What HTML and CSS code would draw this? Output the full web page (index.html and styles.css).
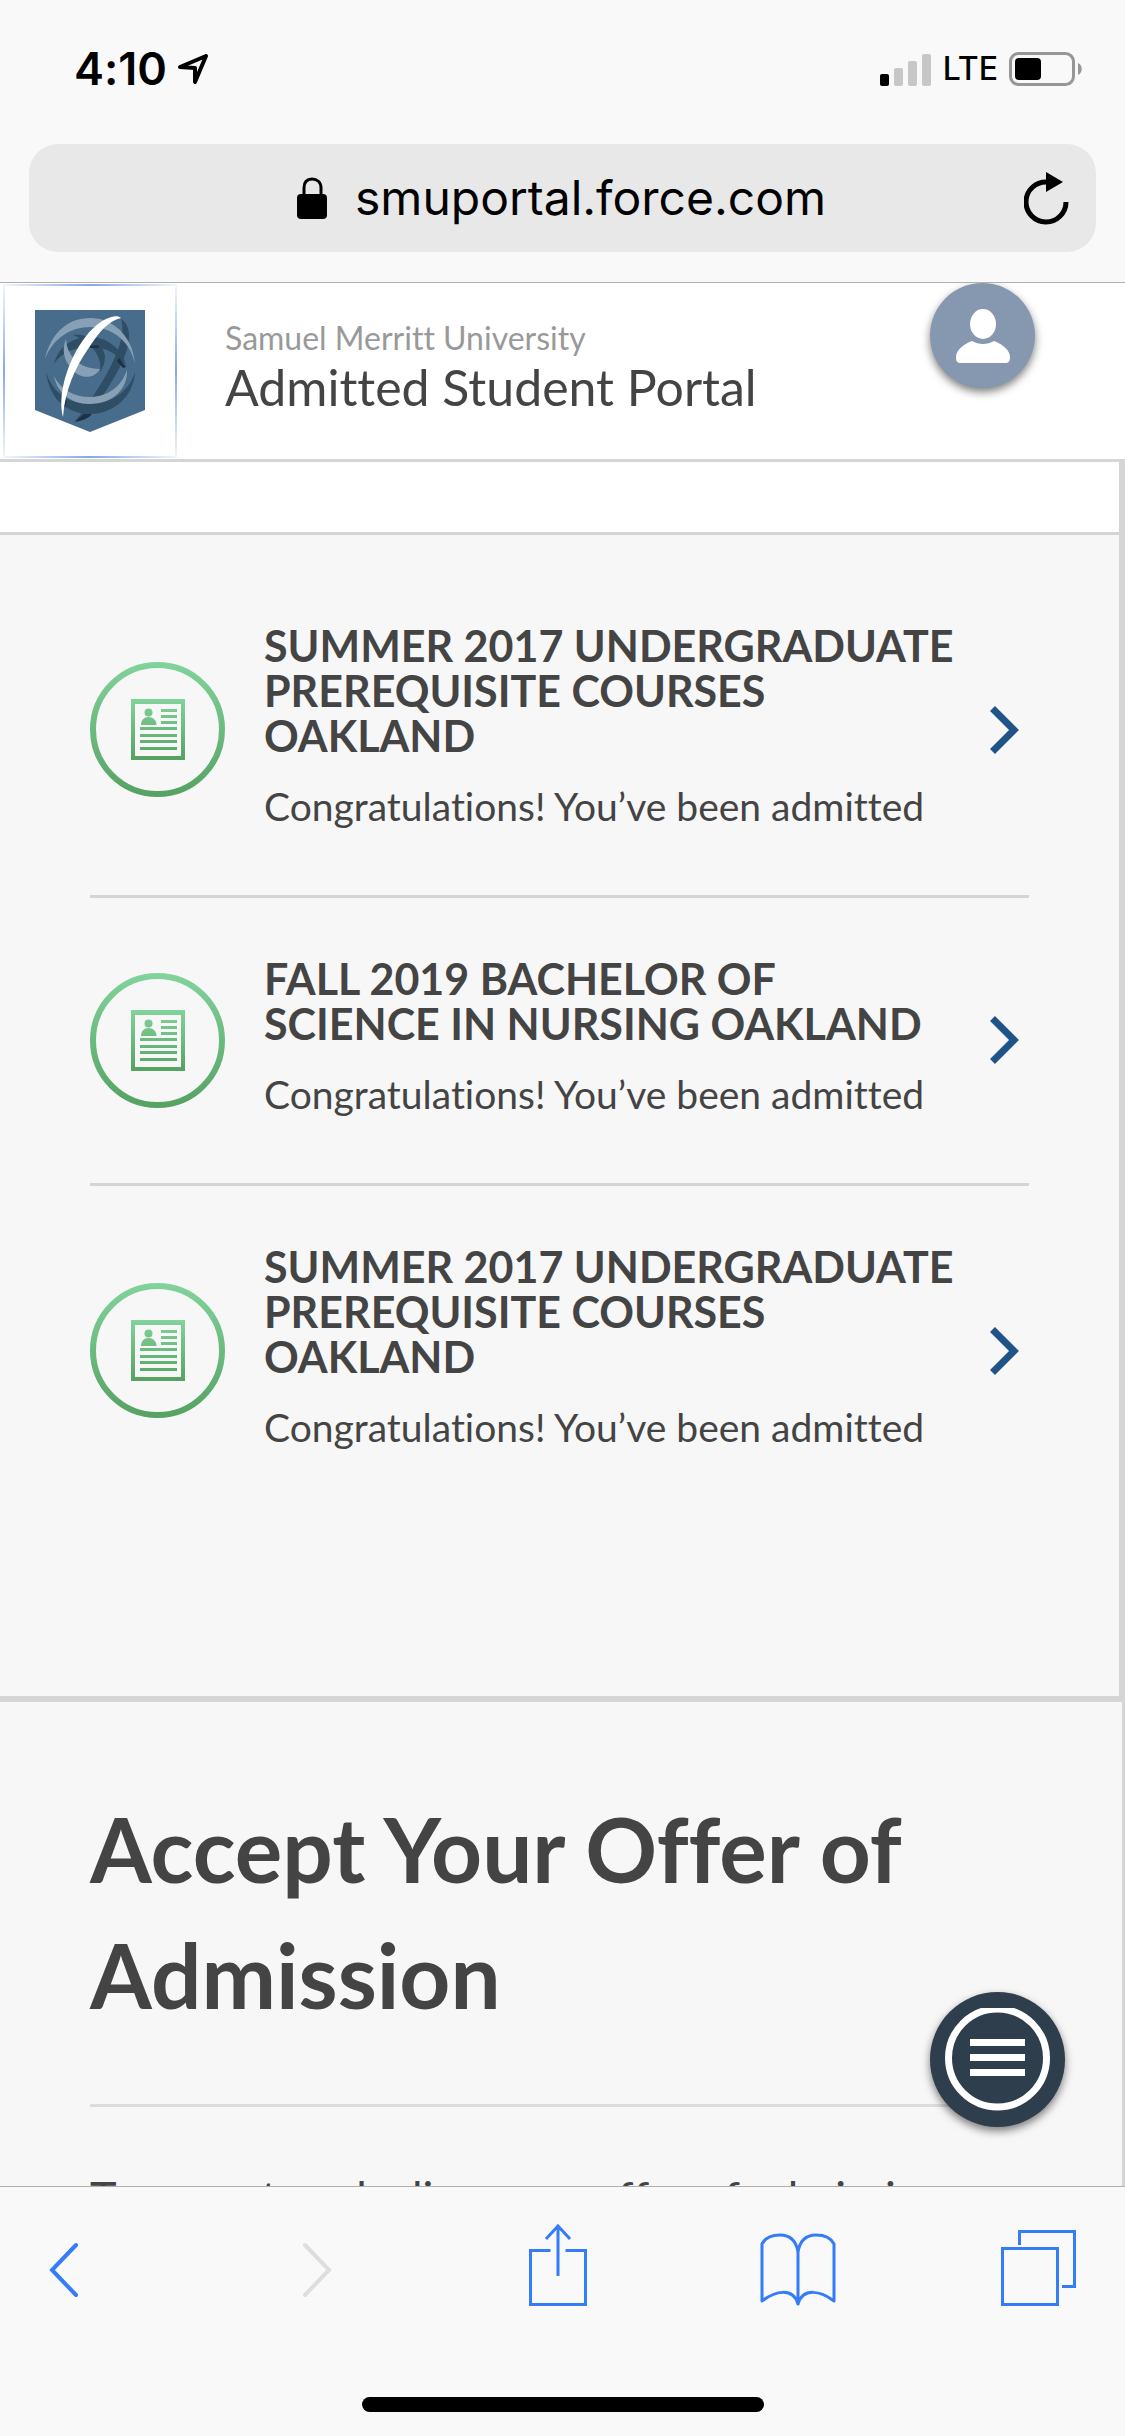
FILE: index.html
```html
<!DOCTYPE html>
<html lang="en">
<head>
<meta charset="utf-8">
<meta name="viewport" content="width=device-width, initial-scale=1">
<title>Admitted Student Portal</title>
<link rel="stylesheet" href="styles.css">
</head>
<body>
<svg class="defs" width="0" height="0" aria-hidden="true">
  <defs>
    <linearGradient id="ring-green" gradientUnits="userSpaceOnUse" x1="0" y1="0" x2="0" y2="135">
      <stop offset="0" stop-color="#82d39c"/><stop offset="1" stop-color="#55a262"/>
    </linearGradient>
    <linearGradient id="doc-green" gradientUnits="userSpaceOnUse" x1="0" y1="37" x2="0" y2="98">
      <stop offset="0" stop-color="#82d39c"/><stop offset="1" stop-color="#55a262"/>
    </linearGradient>
    <symbol id="letter" viewBox="0 0 135 135">
      <circle cx="67.5" cy="67.5" r="64.5" fill="none" stroke="url(#ring-green)" stroke-width="6"/>
      <g fill="url(#doc-green)">
        <path fill-rule="evenodd" d="M41 37h54v61H41zM45 42v52h46V42z"/>
        <circle cx="58.500" cy="50.500" r="4"/>
        <path d="M51 63c0-5 3-8 7.500-8s8 3 8 8z"/>
        <path d="M71 47h16v3H71zM71 53h16v3H71zM71 59h16v3H71zM50 65h37v3H50zM50 72h37v3H50zM50 78h37v3H50zM50 85h37v3H50z"/>
      </g>
    </symbol>
    <symbol id="chevron" viewBox="0 0 29 48">
      <path d="M2.500 2.500L24 24 2.500 45.500" fill="none" stroke="#205488" stroke-width="7"/>
    </symbol>
  </defs>
</svg>

<header class="chrome">
  <div class="status">
    <div class="status-group">
      <span class="time">4:10</span>
      <svg class="location" viewBox="0 0 30 30" width="30" height="30" aria-hidden="true"><path d="M2 13L28 2 17 28v-14z" fill="none" stroke="#000" stroke-width="4" stroke-linejoin="round"/></svg>
    </div>
    <div class="status-group">
      <svg viewBox="0 0 52 33" width="52" height="33" aria-hidden="true"><rect y="21" width="9" height="12" rx="2"/><g fill="#c7c7c7"><rect x="14" y="15" width="9" height="18" rx="2"/><rect x="28" y="8" width="9" height="25" rx="2"/><rect x="42" y="1" width="9" height="32" rx="2"/></g></svg>
      <span class="carrier">LTE</span>
      <svg viewBox="0 0 74 34" width="74" height="34" aria-hidden="true"><rect x="1.500" y="1.500" width="63" height="31" rx="8" fill="none" stroke="#979797" stroke-width="3"/><rect x="6" y="6" width="26" height="22" rx="4"/><path d="M69 11c5 2 5 10 0 12z" fill="#979797"/></svg>
    </div>
  </div>
  <div class="address">
    <a class="site" href="#">
      <svg viewBox="0 0 30 42" width="30" height="42" aria-hidden="true"><rect y="17" width="30" height="25" rx="4"/><path d="M7 20v-9c0-6 3-9 8-9s9 3 9 9v9" fill="none" stroke="#000" stroke-width="3"/></svg>
      <span>smuportal.force.com</span>
    </a>
    <button class="icon-button reload" aria-label="Reload">
      <svg viewBox="0 0 46 54" width="46" height="54" aria-hidden="true"><path d="M23 11a20 20 0 1 0 19 20" fill="none" stroke="#000" stroke-width="5"/><path d="M22 1l17 10-17 10z"/></svg>
    </button>
  </div>
</header>

<main class="portal">
  <div class="brand-bar">
    <a class="logo" href="#" aria-label="Samuel Merritt University">
      <svg viewBox="0 0 110 122" width="110" height="122" aria-hidden="true">
        <path d="M0 0h110v100l-55 22L0 100z" fill="#486d8c"/>
        <path d="M86 9c14 8 8 34-5 55C69 86 56 104 39 112c8-9 14-17 20-27 12-19 34-54 27-76z" fill="#304d66"/>
        <path d="M11 62c7 22 24 32 44 32s39-12 45-32c-1 24-21 42-45 42S14 88 11 62zM19 54c4-17 18-27 36-27 17 0 33 12 36 29-8-12-20-19-36-19-15 0-28 5-36 17z" fill="#304d66"/>
        <path d="M38 25c14-2 31 7 32 22 0 6-2 11-5 15 3-16-9-29-27-37z" fill="#304d66"/>
        <path d="M10 49C16 22 34 8 55 8c23 0 43 18 45 46-4-20-20-37-45-37-19 0-37 11-45 32zM19 66c7 14 20 21 36 21s31-9 37-27c1 20-16 34-37 34-20 0-33-12-36-28zM31 29c1 16 12 30 34 30-7 12-22 9-29-1-8-9-9-20-5-29z" fill="#87a0b5"/>
        <path d="M29 88l3 3c-1 4-2 6-4 7zM55 36c3-1 7-1 10 0l-2 2h-8zM84 48l7 9-3 1-6-7zM49 104h8c-4 5-11 7-17 8z" fill="#1d304a"/>
        <path d="M86 8c-3-3-9-2-15 1C45 21 20 74 28 107c2-27 12-49 25-68C64 22 73 11 86 8z" fill="#fff"/>
      </svg>
    </a>
    <div class="brand-text">
      <p class="university">Samuel Merritt University</p>
      <h1 class="portal-name">Admitted Student Portal</h1>
    </div>
    <button class="icon-button avatar" aria-label="Account">
      <svg viewBox="0 0 54 54" width="54" height="54" aria-hidden="true"><ellipse cx="27" cy="15" rx="13" ry="15" fill="#fff"/><path d="M16 32c7 4 15 4 22 0 10 4 16 10 16 16 0 4-1 6-5 6H5c-4 0-5-2-5-6 0-6 6-12 16-16z" fill="#fff"/></svg>
    </button>
  </div>

  <section class="applications">
    <div class="spacer-bar"></div>
    <ul class="app-list">
      <li><a class="app" href="#">
        <svg class="badge" aria-hidden="true"><use href="#letter"/></svg>
        <div class="app-text"><h2>SUMMER 2017 UNDERGRADUATE PREREQUISITE COURSES OAKLAND</h2><p>Congratulations! You’ve been admitted</p></div>
        <svg class="chevron" aria-hidden="true"><use href="#chevron"/></svg>
      </a></li>
      <li><a class="app" href="#">
        <svg class="badge" aria-hidden="true"><use href="#letter"/></svg>
        <div class="app-text"><h2>FALL 2019 BACHELOR OF<br>SCIENCE IN NURSING OAKLAND</h2><p>Congratulations! You’ve been admitted</p></div>
        <svg class="chevron" aria-hidden="true"><use href="#chevron"/></svg>
      </a></li>
      <li><a class="app" href="#">
        <svg class="badge" aria-hidden="true"><use href="#letter"/></svg>
        <div class="app-text"><h2>SUMMER 2017 UNDERGRADUATE PREREQUISITE COURSES OAKLAND</h2><p>Congratulations! You’ve been admitted</p></div>
        <svg class="chevron" aria-hidden="true"><use href="#chevron"/></svg>
      </a></li>
    </ul>
  </section>

  <section class="offer">
    <h2 class="offer-title">Accept Your Offer of Admission</h2>
    <p class="offer-text">To accept or decline your offer of admission</p>
  </section>

  <button class="icon-button menu" aria-label="Menu">
    <svg viewBox="0 0 105 104" width="105" height="104" aria-hidden="true"><circle cx="52.500" cy="50" r="49" fill="none" stroke="#fff" stroke-width="7"/><path d="M25 31h55v7H25zM25 46h55v7H25zM25 61h55v7H25z" fill="#fff"/></svg>
  </button>
</main>

<footer class="toolbar">
  <nav class="tools" aria-label="Browser">
    <button class="icon-button back" aria-label="Back"><svg viewBox="0 0 30 82" width="30" height="82"><path d="M27 21L3 46l24 25" fill="none" stroke="#347cf8" stroke-width="4" stroke-linecap="round"/></svg></button>
    <button class="icon-button" aria-label="Forward" disabled><svg viewBox="0 0 30 82" width="30" height="82"><path d="M3 21l24 25L3 71" fill="none" stroke="#dedede" stroke-width="4" stroke-linecap="round"/></svg></button>
    <button class="icon-button" aria-label="Share"><svg viewBox="0 0 58 82" width="58" height="82"><path d="M21.500 26.500h-20v54h55v-54h-20M29 52V3M17 15L29 2l12 13" fill="none" stroke="#347cf8" stroke-width="3"/></svg></button>
    <button class="icon-button" aria-label="Bookmarks"><svg viewBox="0 0 76 82" width="76" height="82"><path d="M38 81V28C36 16 29 11 20 11 12 11 5 14 2 20v57c13-10 31-14 36 3 5-17 23-13 36-3V20c-3-6-10-9-18-9-9 0-16 5-18 17" fill="none" stroke="#347cf8" stroke-width="3" stroke-linejoin="round"/></svg></button>
    <button class="icon-button" aria-label="Tabs"><svg viewBox="0 0 75 82" width="75" height="82"><path d="M1.500 24.500h55v56h-55zM18.500 21V7.500h55v55H61" fill="none" stroke="#347cf8" stroke-width="3"/></svg></button>
  </nav>
  <div class="home-bar"></div>
</footer>
</body>
</html>
```
FILE: styles.css
```css
* { box-sizing: border-box; }

body {
  margin: 0;
  height: 100vh;
  display: flex;
  flex-direction: column;
  background: #f9f9f9;
  color: #444;
  font-family: Lato, "Open Sans", sans-serif;
  font-variant-ligatures: none;
}

h1, h2, p, ul { margin: 0; padding: 0; }
ul { list-style: none; }
a { color: inherit; text-decoration: none; }
svg { display: block; flex: none; }
.defs { position: absolute; }

.icon-button {
  display: flex;
  align-items: center;
  justify-content: center;
  flex: none;
  padding: 0;
  border: 0;
  background: none;
}

/* Browser chrome */
.chrome {
  flex: none;
  padding: 42px 29px 30px;
  border-bottom: 1px solid #b0b0b0;
  color: #000;
  font-family: Inter, sans-serif;
}
.status {
  display: flex;
  justify-content: space-between;
  align-items: center;
  height: 54px;
  margin-bottom: 48px;
  padding: 0 13px 0 45px;
}
.status-group { display: flex; align-items: center; gap: 11px; }
.time { font-size: 45px; font-weight: 600; line-height: 54px; }
.carrier { font-size: 32px; font-weight: 500; line-height: 54px; }
.address {
  display: flex;
  align-items: center;
  height: 108px;
  padding: 0 26px;
  border-radius: 29px;
  background: #e8e8e8;
}
.site {
  flex: 1;
  display: flex;
  justify-content: center;
  align-items: center;
  gap: 28px;
  padding-left: 44px;
  font-size: 48px;
  line-height: 60px;
}

/* Portal */
.portal {
  position: relative;
  flex: 1 1 0;
  min-height: 0;
  overflow: hidden;
  background: #f7f7f7;
}
.brand-bar {
  display: flex;
  align-items: center;
  height: 179px;
  padding: 0 90px 0 3px;
  border-bottom: 3px solid #d5d5d5;
  background: #fff;
}
.logo {
  display: flex;
  align-items: center;
  justify-content: center;
  width: 174px;
  height: 174px;
  background:
    linear-gradient(90deg, #f2f6fd, #86a9e6, #f2f6fd) top / 100% 2px no-repeat,
    linear-gradient(90deg, #f2f6fd, #86a9e6, #f2f6fd) bottom / 100% 2px no-repeat,
    linear-gradient(#f2f6fd, #86a9e6, #f2f6fd) left / 2px 100% no-repeat,
    linear-gradient(#f2f6fd, #86a9e6, #f2f6fd) right / 2px 100% no-repeat;
}
.brand-text { flex: 1; margin-left: 48px; padding-bottom: 12px; }
.university { color: #999; font-size: 32px; line-height: 44px; }
.portal-name { font-size: 50px; font-weight: 400; line-height: 54px; }
.avatar {
  align-self: flex-start;
  width: 105px;
  height: 105px;
  border-radius: 50%;
  background: #8698af;
  box-shadow: 0 4px 9px rgba(0, 0, 0, .5);
}

.applications {
  border-right: 6px solid #d5d5d5;
  border-bottom: 6px solid #d5d5d5;
}
.spacer-bar { height: 73px; border-bottom: 3px solid #d5d5d5; background: #fff; }
.app-list { padding: 30px 90px 180px; }
.app {
  display: flex;
  align-items: center;
  padding: 58px 0 59px;
}
.app-list li + li { border-top: 3px solid #d5d5d5; }
.badge { width: 135px; height: 135px; }
.app-text { flex: 1; margin: 0 28px 0 39px; }
.app-text h2 { font-size: 43px; font-weight: 700; line-height: 45px; }
.app-text p { margin-top: 18px; font-size: 39px; line-height: 60px; }
.chevron { width: 29px; height: 48px; margin-right: 10px; }

.offer { padding: 84px 90px 0; border-right: 3px solid #d5d5d5; }
.offer-title {
  padding-bottom: 66px;
  border-bottom: 3px solid #dcdcdc;
  font-size: 89px;
  font-weight: 700;
  line-height: 126px;
}
.offer-text { margin-top: 60px; font-size: 45px; line-height: 60px; white-space: nowrap; }

.menu {
  position: absolute;
  right: 60px;
  bottom: 59px;
  width: 135px;
  height: 135px;
  border-radius: 50%;
  background: #2f3e4d;
  box-shadow: 0 4px 9px rgba(0, 0, 0, .5);
}

/* Browser toolbar */
.toolbar {
  flex: none;
  display: flex;
  flex-direction: column;
  align-items: center;
  padding: 37px 49px 24px;
  border-top: 1px solid #b0b0b0;
}
.tools { display: flex; justify-content: space-between; width: 100%; }
.tools .icon-button { width: 75px; }
.tools .back { width: 65px; justify-content: flex-start; }
.home-bar {
  width: 402px;
  max-width: 60%;
  height: 15px;
  margin-top: 91px;
  border-radius: 8px;
  background: #000;
}
```
